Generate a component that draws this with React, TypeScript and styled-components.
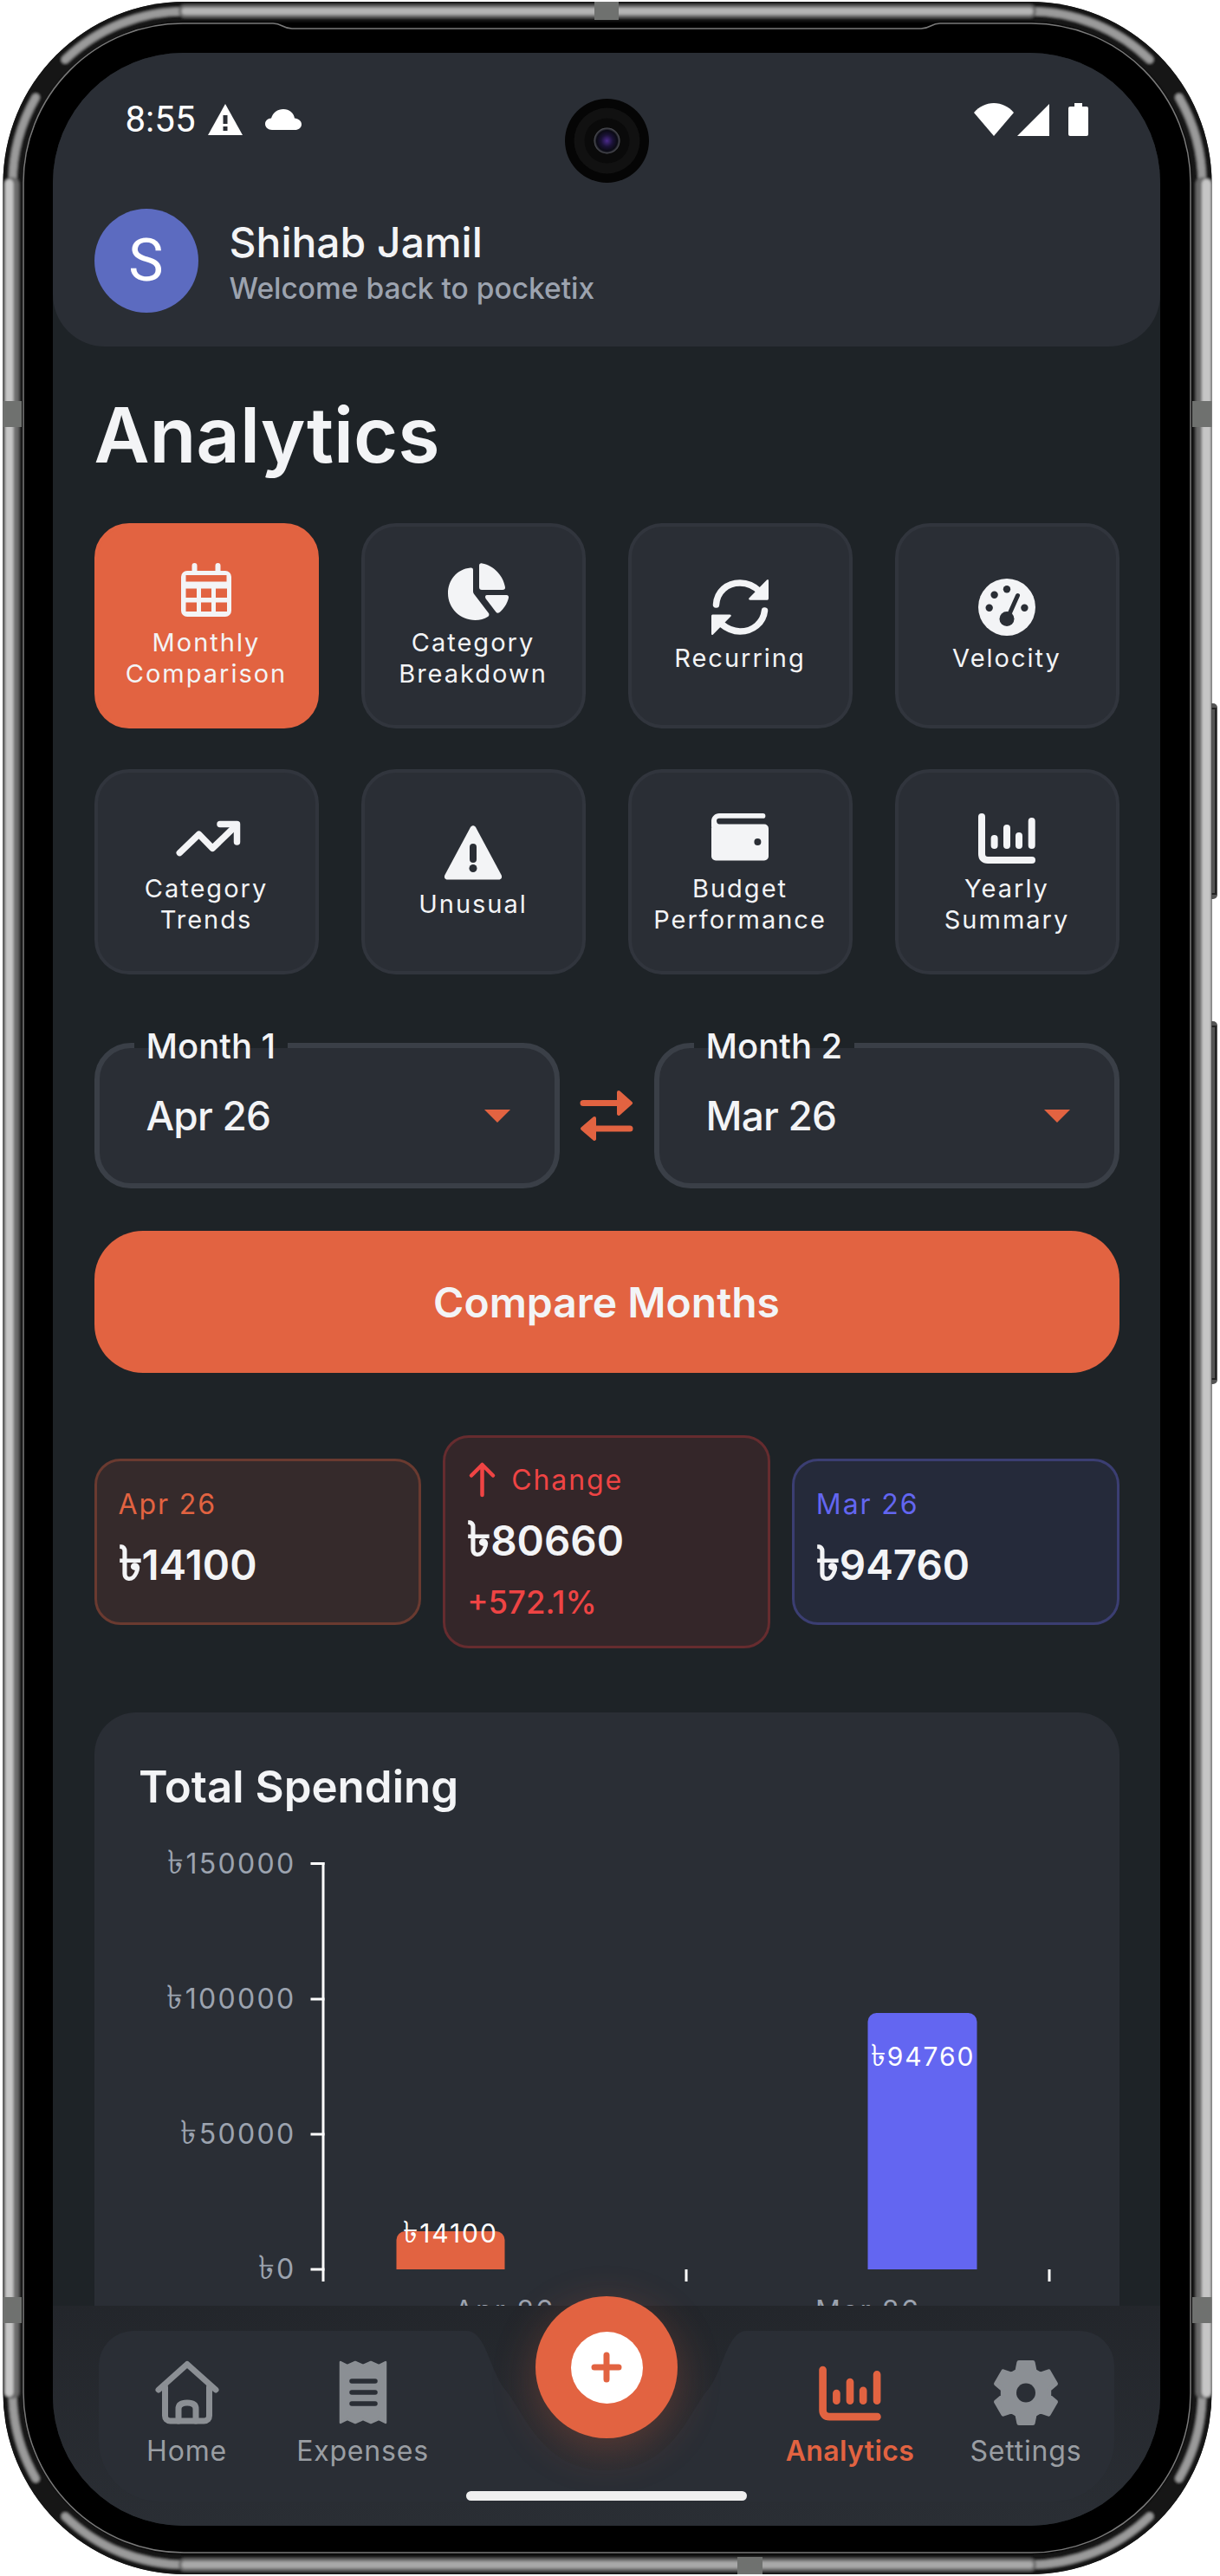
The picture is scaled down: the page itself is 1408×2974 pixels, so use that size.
import React from 'react';
import styled, { createGlobalStyle } from 'styled-components';

const ORANGE = '#e26341';
const CARD = '#2a2e35';
const PAGE = '#1e2327';
const TEXT = '#f3f4f6';
const MUTED = '#9ca3af';
const BLUE = '#6366f1';
const RED = '#ef4444';

const GlobalStyle = createGlobalStyle`
  html, body {
    margin: 0;
    background: #fff;
  }
  * {
    box-sizing: border-box;
  }
`;

const Device = styled.div`
  position: relative;
  width: 1408px;
  height: 2974px;
  padding: 61px 69px 58px 60.5px;
  font-family: Inter, 'Noto Sans', 'DejaVu Sans', sans-serif;
  color: ${TEXT};
`;

const FrameArt = styled.svg`
  position: absolute;
  left: 0;
  top: 0;
`;

const Screen = styled.div`
  position: relative;
  height: 2855px;
  overflow: hidden;
  border-radius: 150px;
  background: ${PAGE};
`;

const Header = styled.header`
  height: 339px;
  padding: 58px 48px 0;
  background: ${CARD};
  border-radius: 0 0 60px 60px;
`;

const StatusBar = styled.div`
  display: flex;
  align-items: center;
  justify-content: space-between;
  height: 38px;
  padding: 0 35px 0 36px;
`;

const StatusGroup = styled.div`
  display: flex;
  align-items: center;
`;

const Clock = styled.span`
  font-family: Roboto, sans-serif;
  font-size: 42px;
  line-height: 38px;
  color: #fff;
  margin-right: 14px;
`;

const Camera = styled.svg`
  position: absolute;
  left: 591px;
  top: 53px;
`;

const UserRow = styled.div`
  display: flex;
  align-items: center;
  gap: 36px;
  margin-top: 84px;
`;

const Avatar = styled.div`
  display: flex;
  align-items: center;
  justify-content: center;
  width: 120px;
  height: 120px;
  border-radius: 50%;
  background: #5c6bc0;
  font-family: Roboto, sans-serif;
  font-size: 68px;
  color: #fff;
`;

const UserText = styled.div`
  padding-top: 3px;
`;

const UserName = styled.div`
  font-size: 48px;
  font-weight: 500;
  line-height: 56px;
`;

const Welcome = styled.div`
  margin-top: 5px;
  font-size: 33.5px;
  font-weight: 500;
  line-height: 40px;
  color: ${MUTED};
`;

const Content = styled.main`
  padding: 0 47.5px 0 48px;
`;

const Title = styled.h1`
  margin: 52px 0 52px;
  height: 100px;
  font-size: 88px;
  font-weight: 600;
  line-height: 100px;
`;

const TabGrid = styled.div`
  display: grid;
  grid-template-columns: repeat(4, 1fr);
  grid-auto-rows: 237px;
  gap: 47px 49px;
`;

const Tab = styled.div<{ $active?: boolean }>`
  display: flex;
  flex-direction: column;
  align-items: center;
  justify-content: center;
  gap: 5px;
  padding-bottom: 3px;
  border-radius: 40px;
  border: 4px solid ${(p) => (p.$active ? ORANGE : '#31353d')};
  background: ${(p) => (p.$active ? ORANGE : CARD)};
`;

const TabLabel = styled.div`
  font-size: 29px;
  line-height: 36px;
  letter-spacing: 2px;
  text-align: center;
  white-space: pre-line;
`;

const Glyph = styled.svg`
  display: block;
  flex: none;
  overflow: visible;
`;

const MonthRow = styled.div`
  display: flex;
  align-items: center;
  justify-content: space-between;
  margin-top: 79px;
`;

const Select = styled.div`
  position: relative;
  display: flex;
  align-items: center;
  justify-content: space-between;
  width: 537px;
  height: 168px;
  padding: 0 51px 0 54px;
  border: 6px solid #3a3f47;
  border-radius: 42px;
  background: ${CARD};
`;

const SelectLabel = styled.span`
  position: absolute;
  left: 40px;
  top: -25px;
  height: 46px;
  padding: 0 14px;
  font-size: 40px;
  font-weight: 500;
  line-height: 46px;
  background: linear-gradient(${PAGE} 25px, ${CARD} 25px);
`;

const SelectValue = styled.span`
  font-size: 46px;
  font-weight: 500;
  letter-spacing: -0.8px;
`;

const Caret = styled.span`
  width: 0;
  height: 0;
  border-left: 15px solid transparent;
  border-right: 15px solid transparent;
  border-top: 15px solid ${ORANGE};
`;

const CompareButton = styled.button`
  display: block;
  width: 100%;
  height: 164px;
  margin-top: 49px;
  border: 0;
  border-radius: 56px;
  background: ${ORANGE};
  color: ${TEXT};
  font-family: Inter, sans-serif;
  font-size: 48px;
  font-weight: 600;
`;

const StatRow = styled.div`
  display: flex;
  align-items: center;
  gap: 25px;
  margin-top: 72px;
`;

const StatCard = styled.div<{ $bg: string; $line: string; $tall?: boolean }>`
  flex: 1;
  height: ${(p) => (p.$tall ? 246 : 192)}px;
  padding: ${(p) => (p.$tall ? 26 : 27)}px 25px 0;
  border: 3px solid ${(p) => p.$line};
  border-radius: 30px;
  background: ${(p) => p.$bg};
`;

const StatLabel = styled.div<{ $color: string }>`
  display: flex;
  align-items: center;
  gap: 20px;
  height: 44px;
  font-size: 32px;
  letter-spacing: 1.9px;
  color: ${(p) => p.$color};
`;

const StatValue = styled.div`
  margin-top: 18px;
  font-size: 47.5px;
  font-weight: 600;
  line-height: 62px;
`;

const Taka = styled.span`
  font-size: 1.16em;
  line-height: 0;
`;

const StatDelta = styled.div`
  margin-top: 17px;
  font-size: 36.5px;
  font-weight: 500;
  line-height: 46px;
  color: ${RED};
`;

const ChartCard = styled.section`
  height: 800px;
  margin-top: 74px;
  padding-top: 53px;
  border-radius: 48px;
  background: ${CARD};
`;

const ChartTitle = styled.h2`
  margin: 0 0 25px 51.5px;
  height: 65px;
  font-size: 51px;
  font-weight: 600;
  line-height: 65px;
`;

const ChartArt = styled.svg`
  display: block;
`;

const AxisText = styled.text`
  font-family: Inter, 'Noto Sans', 'DejaVu Sans', sans-serif;
  font-size: 32px;
  letter-spacing: 2.3px;
  fill: ${MUTED};
`;

const BarText = styled.text`
  font-family: Inter, 'Noto Sans', 'DejaVu Sans', sans-serif;
  font-size: 30px;
  letter-spacing: 1.9px;
  fill: #fff;
  text-anchor: middle;
`;

const BottomNav = styled.nav`
  position: absolute;
  left: 0;
  right: 0;
  bottom: 0;
  height: 254px;
  background: linear-gradient(#23262b, #2a2e34);
`;

const NavShape = styled.svg`
  position: absolute;
  left: 0;
  top: 0;
`;

const NavRow = styled.div`
  position: relative;
  display: flex;
  justify-content: space-between;
  padding: 61px 53.5px 0;
`;

const NavGroup = styled.div`
  display: flex;
`;

const NavItem = styled.div<{ $active?: boolean }>`
  display: flex;
  flex-direction: column;
  align-items: center;
  width: 203px;
  color: ${(p) => (p.$active ? ORANGE : '#8b8f94')};
`;

const NavLabel = styled.div<{ $active?: boolean }>`
  margin-top: 9px;
  font-size: 32px;
  font-weight: ${(p) => (p.$active ? 600 : 400)};
  line-height: 40px;
  letter-spacing: ${(p) => (p.$active ? 0.4 : 0.8)}px;
  color: ${(p) => (p.$active ? ORANGE : '#9a9ea3')};
`;

const Fab = styled.div`
  position: absolute;
  left: 557.5px;
  top: -11px;
  display: flex;
  align-items: center;
  justify-content: center;
  width: 164px;
  height: 164px;
  border-radius: 50%;
  background: ${ORANGE};
  box-shadow: 0 14px 50px rgba(226, 99, 65, 0.28);
`;

const FabInner = styled.div`
  display: flex;
  align-items: center;
  justify-content: center;
  width: 83px;
  height: 83px;
  border-radius: 50%;
  background: #fff;
`;

const HomeBar = styled.div`
  position: absolute;
  left: 477.5px;
  bottom: 29px;
  width: 324px;
  height: 11px;
  border-radius: 6px;
  background: #f0f0f0;
`;

const CloudGlyph = styled.svg`
  margin-left: 26px;
`;

const SignalGlyph = styled.svg`
  margin-left: 4px;
`;

const BatteryGlyph = styled.svg`
  margin-left: 22px;
`;

const rect = (x: number, y: number, w: number, h: number) => `M${x} ${y}h${w}v${h}h${-w}z`;

const CalendarIcon = () => (
  <Glyph width={72} height={72} viewBox="0 0 72 72">
    <path
      fill="currentColor"
      fillRule="evenodd"
      d={
        'M14 12H58a7 7 0 0 1 7 7V58a7 7 0 0 1-7 7H14a7 7 0 0 1-7-7V19a7 7 0 0 1 7-7z' +
        rect(12.5, 17, 47, 7.5) +
        rect(12.5, 32.5, 12.5, 10.5) +
        rect(30, 32.5, 12, 10.5) +
        rect(47, 32.5, 13, 10.5) +
        rect(12.5, 48.5, 12.5, 10.5) +
        rect(30, 48.5, 12, 10.5) +
        rect(47, 48.5, 13, 10.5)
      }
    />
    <path d="M22.5 6V13M49.5 6V13" stroke="currentColor" strokeWidth={6} strokeLinecap="round" />
  </Glyph>
);

const PieIcon = () => (
  <Glyph width={72} height={72} viewBox="0 0 72 72" fill="currentColor">
    <path d="M33 8.5C17 10 7 23 7 38C7 55 21 69 38.5 69C44 69 49 67.5 53 65C54.5 64 54.8 62.5 54 61L38 40C36.5 38.5 36 37 36 35V11C36 9 35 8.3 33 8.5Z" />
    <path d="M43 6C43 4 44.5 3 46.5 3.5C60 6 71 18 73 31C73.3 33 72 34 70 34H46C44 34 43 33 43 31Z" />
    <path d="M52 40H74.5C76.5 40 77.3 41.5 77 43C75.5 50 71 56 66.5 60C65 61 63.5 61 62.5 59.7L50.5 44C49.5 42 50 40 52 40Z" />
  </Glyph>
);

const SyncIcon = () => (
  <Glyph width={72} height={72} viewBox="0 0 72 72" fill="currentColor">
    <path d="M8.5 33C9.5 18 21 8 36 8C45 8 53 12 59 18" fill="none" stroke="currentColor" strokeWidth={7.5} strokeLinecap="round" />
    <path d="M67 4.5C68 3.5 69 4 69 5.5V25.5C69 27 68.5 27.8 67 27.8H48C46 27.8 45.5 26 47 25Z" />
    <path d="M64.5 40C63 54 51 64 36 64C27 64 20 60 14 55" fill="none" stroke="currentColor" strokeWidth={7.5} strokeLinecap="round" />
    <path d="M5 67.5C4 68.5 3 68 3 66.5V46.5C3 45 3.5 44.5 5 44.5H24C26 44.5 26.5 46 25 47Z" />
  </Glyph>
);

const GaugeIcon = () => (
  <Glyph width={72} height={72} viewBox="0 0 72 72">
    <circle cx={36} cy={36} r={33} fill="currentColor" />
    <g fill={CARD}>
      <circle cx={21.6} cy={21.7} r={4.2} />
      <circle cx={36} cy={15.3} r={4.2} />
      <circle cx={15.7} cy={36.7} r={4.2} />
      <circle cx={56.4} cy={36.7} r={4.2} />
      <circle cx={36} cy={49.5} r={8.5} />
    </g>
    <path d="M38 46L48.5 22.5" stroke={CARD} strokeWidth={5} strokeLinecap="round" />
  </Glyph>
);

const TrendIcon = () => (
  <Glyph width={72} height={72} viewBox="0 0 72 72" fill="none" stroke="currentColor" strokeWidth={7.5} strokeLinecap="round" strokeLinejoin="round">
    <path d="M5.3 53.6L27.5 32.2L43.3 48.3L71 21.5" />
    <path d="M52 20.5H71.5V41" />
  </Glyph>
);

const WarningIcon = () => (
  <Glyph width={72} height={72} viewBox="0 0 72 72">
    <path d="M33 6C34.5 3.5 37.5 3.5 39 6L68.5 61C70 64 68.5 66.5 65.5 66.5H6.5C3.5 66.5 2 64 3.5 61Z" fill="currentColor" />
    <path d="M36 29V43" stroke={CARD} strokeWidth={8} strokeLinecap="round" />
    <circle cx={36} cy={53.5} r={4.5} fill={CARD} />
  </Glyph>
);

const WalletIcon = () => (
  <Glyph width={72} height={72} viewBox="0 0 72 72" fill="currentColor">
    <rect x={3} y={20.5} width={66} height={42} rx={5} />
    <path d="M12 8H62.5A2.8 2.8 0 0 1 62.5 13.8H12C10 13.8 9 15 9 16.5C9 18.5 10 20 12 21L3 24V17C3 12 7 8 12 8Z" />
    <circle cx={56.4} cy={41} r={4} fill={CARD} />
  </Glyph>
);

const BarsIcon = ({ size = 72 }: { size?: number }) => (
  <Glyph width={size} height={size} viewBox="0 0 72 72" fill="none" stroke="currentColor" strokeWidth={8} strokeLinecap="round">
    <path d="M7 12V55C7 59.5 9.5 62 14 62H65" />
    <path d="M21.6 37V45M36 25V45M50 34V45M64.7 17V45" />
  </Glyph>
);

const HomeIcon = () => (
  <Glyph width={78} height={78} viewBox="0 0 78 78" fill="none" stroke="currentColor" strokeWidth={7} strokeLinecap="round" strokeLinejoin="round">
    <path d="M6 36L39 6.5L72 36" />
    <path d="M13.5 33V66C13.5 69.5 16 72 19.5 72H58.5C62 72 64.5 69.5 64.5 66V33" />
    <path d="M29 72V58C29 53 33 51 39 51C45 51 49 53 49 58V72" />
  </Glyph>
);

const ReceiptIcon = () => (
  <Glyph width={78} height={78} viewBox="0 0 78 78">
    <path
      d="M13 4L21 8L30 4L39 8L48 4L57 8L65 4V74L57 70L48 74L39 70L30 74L21 70L13 74Z"
      fill="currentColor"
      stroke="currentColor"
      strokeWidth={2.5}
      strokeLinejoin="round"
    />
    <path d="M26 26H53M26 39H53M26 52H53" stroke={CARD} strokeWidth={5.5} strokeLinecap="round" />
  </Glyph>
);

// six lobes, the top and bottom ones pointing straight up and down
const gearPath = () => {
  const cx = 39;
  const cy = 39.5;
  const pts: string[] = [];
  for (let i = 0; i < 6; i++) {
    const a = ((-90 + i * 60) * Math.PI) / 180;
    const at = (r: number, off: number) => {
      const t = a + (off * Math.PI) / 180;
      return `${(cx + r * Math.cos(t)).toFixed(1)} ${(cy + r * Math.sin(t)).toFixed(1)}`;
    };
    pts.push(at(27, -22), at(36, -13), at(36, 13), at(27, 22));
  }
  return `M${pts.join('L')}Z`;
};

const GearIcon = () => (
  <Glyph width={78} height={78} viewBox="0 0 78 78">
    <path d={gearPath()} fill="currentColor" stroke="currentColor" strokeWidth={5} strokeLinejoin="round" />
    <circle cx={39} cy={39.5} r={11} fill={CARD} />
  </Glyph>
);

const SwapIcon = () => (
  <Glyph width={60} height={60} viewBox="0 0 60 60" fill={ORANGE} stroke={ORANGE} strokeLinecap="round" strokeLinejoin="round">
    <path d="M3 15.5H46M57 45H14" strokeWidth={7} fill="none" />
    <path d="M44 3L58 15.5L44 28Z" strokeWidth={4} />
    <path d="M16 33L2 45L16 57Z" strokeWidth={4} />
  </Glyph>
);

const ArrowUp = () => (
  <Glyph width={31} height={41} viewBox="0 0 31 41" fill="none" stroke={RED} strokeWidth={4.5} strokeLinecap="round" strokeLinejoin="round">
    <path d="M17.5 3V38M5 15.5L17.5 3L30 15.5" />
  </Glyph>
);

const tabs = [
  { label: 'Monthly\nComparison', icon: <CalendarIcon />, active: true },
  { label: 'Category\nBreakdown', icon: <PieIcon /> },
  { label: 'Recurring', icon: <SyncIcon /> },
  { label: 'Velocity', icon: <GaugeIcon /> },
  { label: 'Category\nTrends', icon: <TrendIcon /> },
  { label: 'Unusual', icon: <WarningIcon /> },
  { label: 'Budget\nPerformance', icon: <WalletIcon /> },
  { label: 'Yearly\nSummary', icon: <BarsIcon /> },
];

const DeviceFrame = () => {
  const sides = 'M14.5 212V2762M1387.5 212V2762M213.5 13H1188.5M213.5 2961H1188.5';
  const arcs =
    'M41.2 112.5A199 199 0 0 0 14.5 212M14.5 2762A199 199 0 0 0 41.2 2861.5' +
    'M1360.8 112.5A199 199 0 0 1 1387.5 212M1387.5 2762A199 199 0 0 1 1360.8 2861.5' +
    'M75.3 68.8A199 199 0 0 1 213.5 13M1188.5 13A199 199 0 0 1 1326.7 68.8' +
    'M75.3 2905.2A199 199 0 0 0 213.5 2961M1188.5 2961A199 199 0 0 0 1326.7 2905.2';
  return (
    <FrameArt width={1408} height={2974} viewBox="0 0 1408 2974">
      <defs>
        <filter id="soft" x="-5%" y="-5%" width="110%" height="110%">
          <feGaussianBlur stdDeviation={1.8} />
        </filter>
        <clipPath id="shell">
          <rect x={3.5} y={2} width={1395} height={2970} rx={210} />
        </clipPath>
      </defs>
      <g fill="#555">
        <rect x={1394} y={812} width={11} height={226} rx={5} />
        <rect x={1394} y={1179} width={11} height={419} rx={5} />
      </g>
      <path d="M1396 818H1403V1032H1396M1396 1185H1403V1592H1396" fill="none" stroke="#222" strokeWidth={2} />
      <rect x={3.5} y={2} width={1395} height={2970} rx={210} fill="#000" />
      <g clipPath="url(#shell)">
        <g fill="none" filter="url(#soft)">
          <rect x={14.5} y={13} width={1373} height={2948} rx={199} stroke="#181818" strokeWidth={24} />
          <path d={arcs} stroke="#9a9a9a" strokeWidth={9} strokeLinecap="round" />
          <path d={sides} stroke="#6b6b6b" strokeWidth={15} strokeLinecap="round" />
          <g stroke="#c6c6c6" strokeLinecap="round">
            <path d="M14.5 212V2762" strokeWidth={10} transform="translate(-4 0)" />
            <path d="M1387.5 212V2762" strokeWidth={11} transform="translate(5 0)" />
            <path d="M213.5 13H1188.5" strokeWidth={8} stroke="#b4b4b4" />
            <path d="M213.5 2961H1188.5" strokeWidth={8} stroke="#a8a8a8" />
          </g>
        </g>
        <g fill="#6f716f">
          <rect x={0} y={463} width={25} height={30} />
          <rect x={0} y={2652} width={25} height={30} />
          <rect x={1376} y={463} width={32} height={30} />
          <rect x={1376} y={2652} width={32} height={30} />
          <rect x={686} y={0} width={28} height={23} />
          <rect x={851} y={2952} width={29} height={22} />
        </g>
      </g>
      <path
        d="M315 27C326 27 326 33 337 33H1063C1074 33 1074 27 1085 27H1190A184 184 0 0 1 1374 211V2763A184 184 0 0 1 1190 2947H212A185 185 0 0 1 27 2762V211A184 184 0 0 1 211 27Z"
        fill="none"
        stroke="#7a7a7a"
        strokeWidth={1.5}
      />
    </FrameArt>
  );
};

const TotalChart = () => {
  // chart box starts at page x 108.5, y 2120
  const ticks = [
    { y: 31.5, label: '150000' },
    { y: 188, label: '100000' },
    { y: 344, label: '50000' },
    { y: 500, label: '0' },
  ];
  return (
    <ChartArt width={1183} height={600} viewBox="0 0 1183 600">
      {ticks.map((t) => (
        <g key={t.label}>
          <AxisText x={232.5} y={t.y + 11} textAnchor="end">
            <tspan fontSize={38}>৳</tspan>
            {t.label}
          </AxisText>
          <rect x={249.5} y={t.y - 1.5} width={16} height={3} fill="#fff" />
        </g>
      ))}
      <rect x={262.5} y={30} width={3} height={484} fill="#fff" />
      <rect x={681.5} y={500} width={3} height={14} fill="#fff" />
      <rect x={1100.5} y={500} width={3} height={14} fill="#fff" />
      <path d="M348.5 500V466a10 10 0 0 1 10-10H463.5a10 10 0 0 1 10 10V500Z" fill={ORANGE} />
      <path d="M892.5 500V214a10 10 0 0 1 10-10H1008.5a10 10 0 0 1 10 10V500Z" fill={BLUE} />
      <BarText x={411} y={469}>
        <tspan fontSize={35}>৳</tspan>14100
      </BarText>
      <BarText x={956} y={265}>
        <tspan fontSize={35}>৳</tspan>94760
      </BarText>
      <AxisText x={473.5} y={559} textAnchor="middle">Apr 26</AxisText>
      <AxisText x={892.5} y={559} textAnchor="middle">Mar 26</AxisText>
    </ChartArt>
  );
};

const App: React.FC = () => {
  return (
    <Device>
      <GlobalStyle />
      <DeviceFrame />
      <Screen>
        <Header>
          <StatusBar>
            <StatusGroup>
              <Clock>8:55</Clock>
              <svg width={40} height={36} viewBox="0 0 40 36">
                <path d="M20 0L40 36H0Z" fill="#fff" />
                <rect x={17.5} y={13} width={5} height={10} fill={CARD} />
                <rect x={17.5} y={26} width={5} height={5} fill={CARD} />
              </svg>
              <CloudGlyph width={42} height={24} viewBox="0 0 42 24">
                <path d="M8 24C3.5 24 0 21 0 17C0 13.5 3 10.5 7 10.5C9 4 14.5 0 21 0C28 0 33 4.5 34 10.5C38.5 11 42 13.5 42 17.5C42 21.5 38.5 24 34.5 24Z" fill="#fff" />
              </CloudGlyph>
            </StatusGroup>
            <StatusGroup>
              <svg width={46} height={38} viewBox="0 0 46 38">
                <path d="M0 11C6 4 14 0 23 0C32 0 40 4 46 11L23 38Z" fill="#fff" />
              </svg>
              <SignalGlyph width={37} height={37} viewBox="0 0 37 37">
                <path d="M37 0V37H0Z" fill="#fff" />
              </SignalGlyph>
              <BatteryGlyph width={23} height={38} viewBox="0 0 23 38">
                <path d="M7 0H16V4H21A2 2 0 0 1 23 6V36A2 2 0 0 1 21 38H2A2 2 0 0 1 0 36V6A2 2 0 0 1 2 4H7Z" fill="#fff" />
              </BatteryGlyph>
            </StatusGroup>
          </StatusBar>
          <Camera width={97} height={97} viewBox="0 0 97 97">
            <defs>
              <radialGradient id="lens" cx="0.5" cy="0.5" r="0.5">
                <stop offset="0" stopColor="#4b2a8c" />
                <stop offset="0.45" stopColor="#1a1236" />
                <stop offset="0.8" stopColor="#0a0a14" />
                <stop offset="1" stopColor="#55565c" />
              </radialGradient>
            </defs>
            <circle cx={48.5} cy={48.5} r={48.5} fill="#050505" />
            <circle cx={48.5} cy={48.5} r={38} fill="#111" />
            <circle cx={48.5} cy={48.5} r={26} fill="#0a0a0a" />
            <circle cx={48.5} cy={48.5} r={15} fill="url(#lens)" />
          </Camera>
          <UserRow>
            <Avatar>S</Avatar>
            <UserText>
              <UserName>Shihab Jamil</UserName>
              <Welcome>Welcome back to pocketix</Welcome>
            </UserText>
          </UserRow>
        </Header>

        <Content>
          <Title>Analytics</Title>
          <TabGrid>
            {tabs.map((t) => (
              <Tab key={t.label} $active={t.active}>
                {t.icon}
                <TabLabel>{t.label}</TabLabel>
              </Tab>
            ))}
          </TabGrid>

          <MonthRow>
            <Select>
              <SelectLabel>Month 1</SelectLabel>
              <SelectValue>Apr 26</SelectValue>
              <Caret />
            </Select>
            <SwapIcon />
            <Select>
              <SelectLabel>Month 2</SelectLabel>
              <SelectValue>Mar 26</SelectValue>
              <Caret />
            </Select>
          </MonthRow>

          <CompareButton>Compare Months</CompareButton>

          <StatRow>
            <StatCard $bg="#352a2b" $line="#6a3a30">
              <StatLabel $color={ORANGE}>Apr 26</StatLabel>
              <StatValue>
                <Taka>৳</Taka>14100
              </StatValue>
            </StatCard>
            <StatCard $tall $bg="#342629" $line="#662c2f">
              <StatLabel $color={RED}>
                <ArrowUp />
                Change
              </StatLabel>
              <StatValue>
                <Taka>৳</Taka>80660
              </StatValue>
              <StatDelta>+572.1%</StatDelta>
            </StatCard>
            <StatCard $bg="#252a3a" $line="#3b3e72">
              <StatLabel $color={BLUE}>Mar 26</StatLabel>
              <StatValue>
                <Taka>৳</Taka>94760
              </StatValue>
            </StatCard>
          </StatRow>

          <ChartCard>
            <ChartTitle>Total Spending</ChartTitle>
            <TotalChart />
          </ChartCard>
        </Content>

        <BottomNav>
          <NavShape width={1278} height={254} viewBox="0 0 1278 254">
            <path
              d="M53 69A40 40 0 0 1 93 29H478C500 29 505 78 523 98C545 125 565 190 639 190C713 190 733 125 755 98C773 78 778 29 800 29H1185A40 40 0 0 1 1225 69V156A70 70 0 0 1 1155 226H123A70 70 0 0 1 53 156Z"
              fill={CARD}
            />
          </NavShape>
          <NavRow>
            <NavGroup>
              <NavItem>
                <HomeIcon />
                <NavLabel>Home</NavLabel>
              </NavItem>
              <NavItem>
                <ReceiptIcon />
                <NavLabel>Expenses</NavLabel>
              </NavItem>
            </NavGroup>
            <NavGroup>
              <NavItem $active>
                <BarsIcon size={78} />
                <NavLabel $active>Analytics</NavLabel>
              </NavItem>
              <NavItem>
                <GearIcon />
                <NavLabel>Settings</NavLabel>
              </NavItem>
            </NavGroup>
          </NavRow>
          <Fab>
            <FabInner>
              <svg width={36} height={36} viewBox="0 0 36 36">
                <path d="M4 18H32M18 4V32" stroke={ORANGE} strokeWidth={7} strokeLinecap="round" />
              </svg>
            </FabInner>
          </Fab>
          <HomeBar />
        </BottomNav>
      </Screen>
    </Device>
  );
};

export default App;
